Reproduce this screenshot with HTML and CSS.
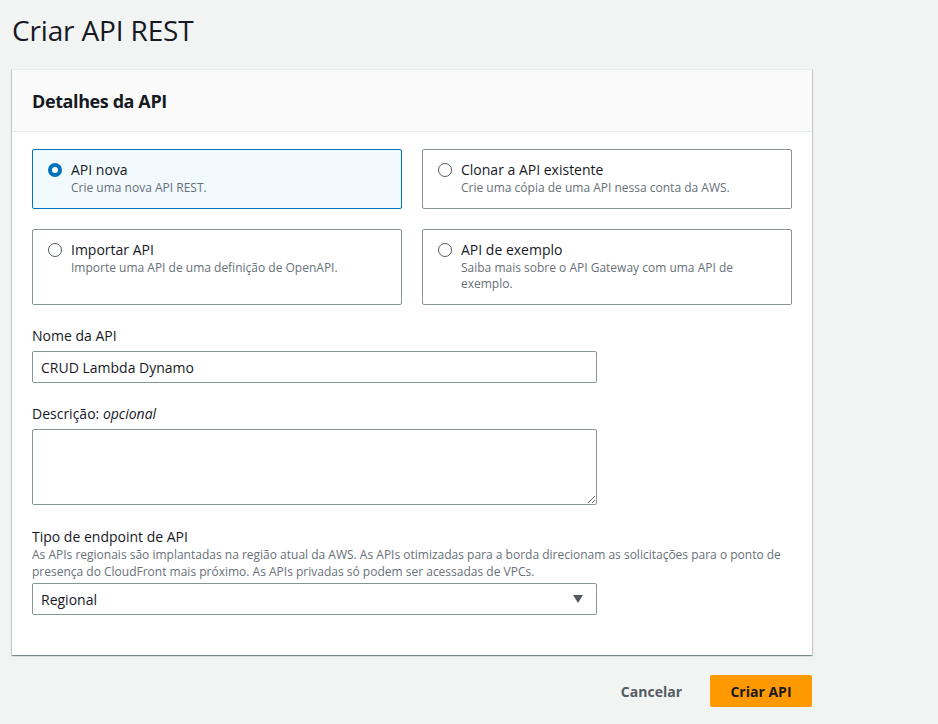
FILE: index.html
```html
<!DOCTYPE html>
<html lang="pt">
<head>
<meta charset="utf-8">
<title>Criar API REST</title>
<link rel="stylesheet" href="styles.css">
</head>
<body>
<div class="page">
  <h1 class="title">Criar API REST</h1>
  <section class="card">
    <header class="card-header"><h2>Detalhes da API</h2></header>
    <div class="card-body">
      <div class="tiles">
        <label class="tile selected">
          <span class="radio on"></span>
          <span class="tile-text"><span class="tile-title">API nova</span><span class="tile-desc">Crie uma nova API REST.</span></span>
        </label>
        <label class="tile">
          <span class="radio"></span>
          <span class="tile-text"><span class="tile-title">Clonar a API existente</span><span class="tile-desc">Crie uma cópia de uma API nessa conta da AWS.</span></span>
        </label>
        <label class="tile">
          <span class="radio"></span>
          <span class="tile-text"><span class="tile-title">Importar API</span><span class="tile-desc">Importe uma API de uma definição de OpenAPI.</span></span>
        </label>
        <label class="tile">
          <span class="radio"></span>
          <span class="tile-text"><span class="tile-title">API de exemplo</span><span class="tile-desc">Saiba mais sobre o API Gateway com uma API de exemplo.</span></span>
        </label>
      </div>

      <div class="field first">
        <div class="label">Nome da API</div>
        <input class="input" type="text" value="CRUD Lambda Dynamo">
      </div>

      <div class="field second">
        <div class="label">Descrição: <i>opcional</i></div>
        <textarea class="textarea"></textarea>
      </div>

      <div class="field third">
        <div class="label">Tipo de endpoint de API</div>
        <div class="hint">As APIs regionais são implantadas na região atual da AWS. As APIs otimizadas para a borda direcionam as solicitações para o ponto de presença do CloudFront mais próximo. As APIs privadas só podem ser acessadas de VPCs.</div>
        <div class="select">
          <span>Regional</span>
          <svg class="caret" width="12" height="10" viewBox="0 0 12 10"><polygon points="1,1 11,1 6,9" fill="#545b64"/></svg>
        </div>
      </div>
    </div>
  </section>
  <div class="actions">
    <button class="btn-link">Cancelar</button>
    <button class="btn-primary">Criar API</button>
  </div>
</div>
</body>
</html>
```

FILE: styles.css
```css
* { box-sizing: border-box; }
html, body { margin: 0; padding: 0; }
body {
  background: #f2f3f3;
  font-family: "Open Sans", "Noto Sans", sans-serif;
  color: #16191f;
  width: 938px;
  height: 724px;
  overflow: hidden;
}
.page {
  padding: 12px 0 0 12px;
  width: 812px;
}
.title {
  margin: 0;
  font-size: 28px;
  line-height: 36px;
  font-weight: 400;
  height: 57px;
  letter-spacing: -0.15px;
}
.card {
  background: #fff;
  width: 800px;
  box-shadow: 0 1px 1px 0 rgba(0,28,36,.3), 1px 1px 1px 0 rgba(0,28,36,.15), -1px 1px 1px 0 rgba(0,28,36,.15);
  border-top: 1px solid #eaeded;
}
.card-header {
  background: #fafafa;
  border-bottom: 1px solid #eaeded;
  height: 62px;
  padding: 0 20px;
  display: flex;
  align-items: center;
}
.card-header h2 {
  margin: 0;
  font-size: 18px;
  font-weight: 700;
  line-height: 22px;
  letter-spacing: -0.4px;
}
.card-body {
  padding: 17px 20px 40px;
}
.tiles {
  display: grid;
  grid-template-columns: 370px 370px;
  gap: 20px;
}
.tile {
  border: 1px solid #879596;
  border-radius: 2px;
  padding: 10px 16px 12px 15px;
  display: flex;
  gap: 9px;
  align-items: flex-start;
}
.tile.selected {
  background: #f1faff;
  border-color: #0073bb;
}
.radio {
  flex: none;
  width: 14px;
  height: 14px;
  margin-top: 3px;
  border-radius: 50%;
  border: 1.5px solid #545b64;
  background: #fff;
}
.radio.on {
  border: 4px solid #0073bb;
}
.tile-text {
  display: flex;
  flex-direction: column;
}
.tile-title {
  font-size: 14px;
  line-height: 20px;
}
.tile-desc {
  font-size: 12px;
  line-height: 16px;
  color: #687078;
}
.field.first { margin-top: 21px; }
.field.second { margin-top: 21px; }
.field.third { margin-top: 22px; }
.label {
  font-size: 14px;
  line-height: 20px;
  margin-bottom: 5px;
}
.label i { font-style: italic; }
.input, .textarea, .select {
  display: block;
  width: 565px;
  border: 1px solid #879596;
  border-radius: 2px;
  background: #fff;
  font-family: inherit;
  font-size: 14px;
  color: #16191f;
  margin: 0;
}
.input {
  height: 32px;
  padding: 0 8px;
}
.textarea {
  height: 76px;
  padding: 4px 8px;
  resize: vertical;
}
.hint {
  font-size: 12px;
  line-height: 17px;
  color: #687078;
  margin-top: -6px;
  margin-bottom: 3px;
}
.select {
  height: 32px;
  padding: 0 12px 0 8px;
  display: flex;
  align-items: center;
  justify-content: space-between;
}
.caret { display: block; }
.actions {
  display: flex;
  justify-content: flex-end;
  align-items: center;
  gap: 28px;
  margin-top: 20px;
  width: 800px;
}
.btn-link {
  background: none;
  border: none;
  font-family: inherit;
  font-size: 14px;
  font-weight: 700;
  color: #545b64;
  padding: 0;
}
.btn-primary {
  background: #ff9900;
  border: none;
  border-radius: 2px;
  height: 32px;
  width: 102px;
  font-family: inherit;
  font-size: 14px;
  font-weight: 700;
  color: #16191f;
}
```
